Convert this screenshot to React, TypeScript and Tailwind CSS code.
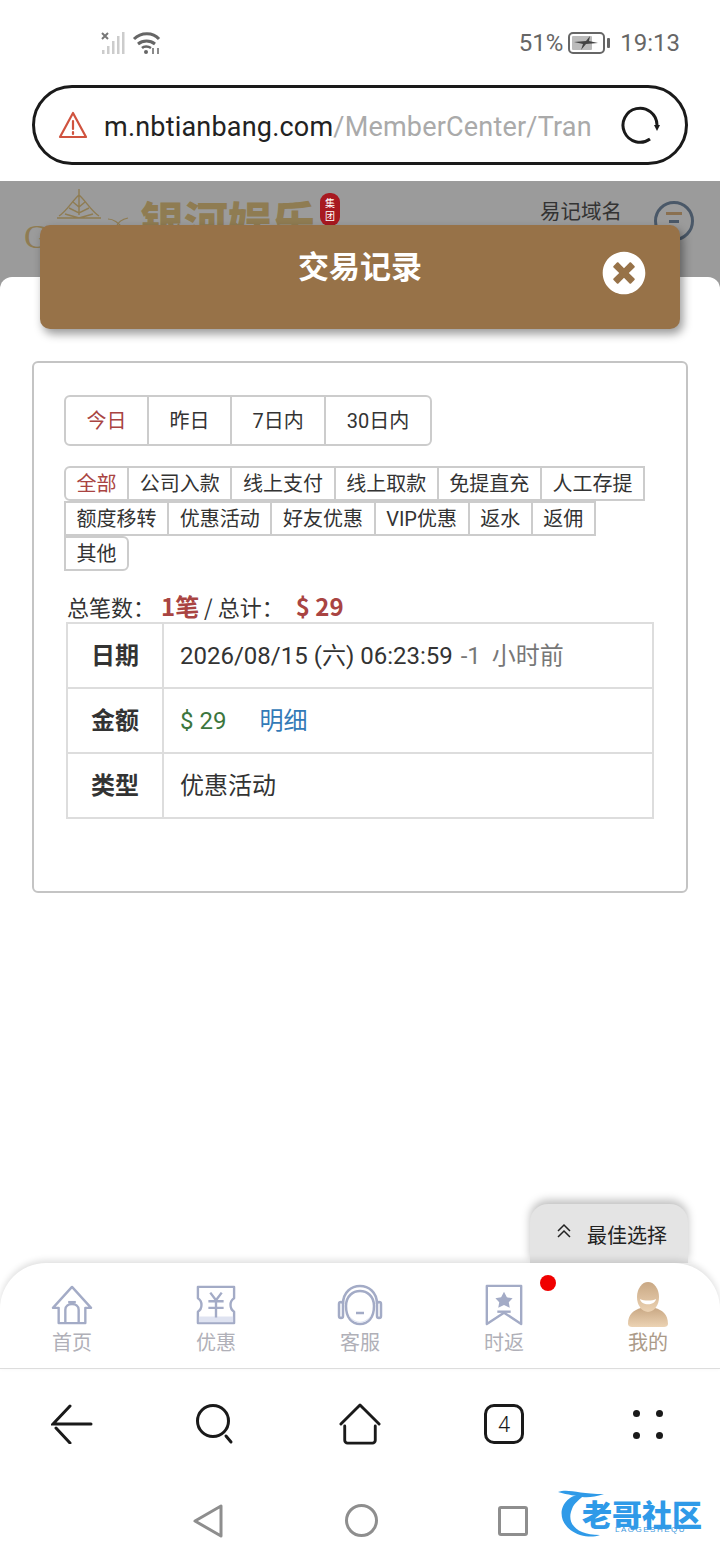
import React from 'react';
import { FaTimesCircle } from 'react-icons/fa';

const cjk = '[font-family:Roboto,"Noto_Sans_CJK_SC",sans-serif]';

const dateTabs = [
  { label: '今日', active: true },
  { label: '昨日' },
  { label: '7日内' },
  { label: '30日内' },
];

const filterTabs = [
  '全部', '公司入款', '线上支付', '线上取款', '免提直充', '人工存提',
  '额度移转', '优惠活动', '好友优惠', 'VIP优惠', '返水', '返佣', '其他',
];

const StatusBar = () => (
  <div className="h-[85px] flex items-center justify-between pl-[100px] pr-[40px] text-[#666] shrink-0">
    <div className="flex items-center gap-[6px]">
      <svg width="26" height="24" viewBox="0 0 26 24">
        <path d="M2 2l6 6M8 2l-6 6" stroke="#777" strokeWidth="2" />
        <rect x="2" y="19" width="2.5" height="4" fill="#ccc" />
        <rect x="7" y="15" width="2.5" height="8" fill="#ccc" />
        <rect x="12" y="10" width="2.5" height="13" fill="#ccc" />
        <rect x="17" y="5" width="2.5" height="18" fill="#ccc" />
        <rect x="22" y="1" width="2.5" height="22" fill="#ccc" />
      </svg>
      <svg width="30" height="24" viewBox="0 0 30 24" fill="none" stroke="#666" strokeWidth="3">
        <path d="M2 8c7-7 19-7 25 0" />
        <path d="M6 13c5-4 12-4 17 0" />
        <path d="M10 17c2-2 6-2 9 0" strokeWidth="2.5" />
        <circle cx="14" cy="21" r="2" fill="#666" stroke="none" />
        <path d="M21 23v-6M26 17v6" strokeWidth="1.5" />
      </svg>
    </div>
    <div className={`flex items-center text-[24px] ${cjk}`}>
      <span>51%</span>
      <svg className="ml-[5px]" width="44" height="22" viewBox="0 0 44 22">
        <rect x="1" y="1" width="35" height="20" rx="4" fill="none" stroke="#666" strokeWidth="2" />
        <rect x="4" y="4" width="20" height="14" rx="1" fill="#bbb" />
        <path d="M6 10l12-1 4-5-1 5 9 2-12 1-5 6 2-6z" fill="#444" />
        <rect x="39" y="6" width="3" height="10" rx="1" fill="#666" />
      </svg>
      <span className="ml-[8px]">19:13</span>
    </div>
  </div>
);

const UrlBar = () => (
  <div className="h-[96px] px-[32px] shrink-0">
    <div className="h-[80px] border-[3px] border-[#1a1a1a] rounded-full flex items-center pl-[23px] pr-[25px]">
      <svg width="30" height="28" viewBox="0 0 30 28" fill="none" stroke="#d0533f" strokeWidth="2.2" strokeLinejoin="round">
        <path d="M15 2L28 26H2z" />
        <path d="M15 10v8M15 21v2" strokeLinecap="round" />
      </svg>
      <div className={`ml-[16px] pt-[5px] w-[490px] overflow-hidden whitespace-nowrap text-[27px] tracking-[0.2px] text-[#222] ${cjk}`}>
        m.nbtianbang.com<span className="text-[#aaa]">/MemberCenter/Tran</span>
      </div>
      <svg className="ml-auto" width="40" height="40" viewBox="0 0 40 40" fill="none" stroke="#1a1a1a" strokeWidth="3">
        <path d="M30 34A17 17 0 1 1 37 20" />
        <path d="M34 20h6l-3 6z" fill="#1a1a1a" stroke="none" />
      </svg>
    </div>
  </div>
);

const SiteHeader = () => (
  <div className="h-[108px] bg-[#9b9b9b] flex items-start shrink-0 overflow-hidden pl-[24px] pr-[26px]">
    <div className="flex items-start">
      <div className="flex flex-col items-center w-[110px] pt-[8px]">
        <svg width="46" height="30" viewBox="0 0 46 30" fill="none" stroke="#8f7c52" strokeWidth="1.4">
          <path d="M23 0v26M1 29h44M3 27C11 22 16 12 23 6c7 6 12 16 20 21M9 25l14 4 14-4M13 19l10 5 10-5M17 13l6 5 6-5" />
        </svg>
        <span className="text-[#8f7c52] text-[34px] self-start leading-none mt-[1px] [font-family:'Liberation_Serif',serif]">G</span>
      </div>
      <svg className="ml-[-28px] mt-[36px]" width="24" height="10" viewBox="0 0 24 10" fill="none" stroke="#8f7c52" strokeWidth="1.2">
        <path d="M2 2c6 0 10 4 14 8M22 1c-5 1-10 4-12 9" />
      </svg>
      <span className="text-[#8f7c52] text-[44px] font-black leading-none mt-[17px] ml-[10px] [font-family:'Noto_Sans_CJK_SC',sans-serif] whitespace-nowrap">银河娱乐</span>
      <div className="ml-[4px] mt-[12px] w-[20px] h-[33px] rounded-[9px] bg-[#a81920] text-white text-[10px] leading-[13px] text-center pt-[3px] [font-family:'Noto_Sans_CJK_SC',sans-serif]">集<br />团</div>
    </div>
    <span className="ml-auto mt-[14px] text-[20.5px] text-[#333] [font-family:'Noto_Sans_CJK_SC',sans-serif]">易记域名</span>
    <div className="ml-[32px] mt-[20px] w-[40px] h-[40px] rounded-full border-[3px] border-[#4a5868] flex flex-col items-center pt-[8px] gap-[5px]">
      <div className="w-[16px] h-[3px] bg-[#8a7050]" />
      <div className="w-[10px] h-[3px] bg-[#4a5868]" />
    </div>
  </div>
);

const ModalTitle = () => (
  <div className="absolute left-[40px] top-[225px] w-[640px] h-[104px] bg-[#977248] rounded-[10px] shadow-[3px_5px_10px_rgba(0,0,0,0.4)] flex items-center justify-center">
    <span className="text-white text-[31px] font-bold mt-[-23px] [font-family:'Noto_Sans_CJK_SC',sans-serif]">交易记录</span>
    <FaTimesCircle className="absolute right-[34px] top-[26px] text-white" size={44} />
  </div>
);

const RecordCard = () => (
  <div className={`mx-[32px] mt-[84px] h-[532px] border-2 border-[#c4c4c4] rounded-[6px] pt-[32px] pl-[30px] pr-[30px] text-[#333] shrink-0 ${cjk}`}>
    <div className="flex w-fit h-[51px] border-2 border-[#ccc] rounded-[6px] text-[20px]">
      {dateTabs.map((t, i) => (
        <div
          key={t.label}
          className={`flex items-center px-[20.5px] ${i > 0 ? 'border-l-2 border-[#ccc]' : ''} ${t.active ? 'text-[#a94442]' : ''}`}
        >
          {t.label}
        </div>
      ))}
    </div>

    <div className="flex flex-wrap w-[590px] mt-[20px] text-[20px]">
      {filterTabs.map((t, i) => (
        <div
          key={t}
          className={`h-[35px] px-[10.6px] flex items-center border-2 border-[#ccc] ml-[-2px] first:ml-0 [&:nth-child(7)]:ml-0 [&:nth-child(13)]:ml-0 ${
            i === 0 ? 'text-[#a94442] rounded-l-[6px]' : ''
          } ${i === 12 ? 'rounded-r-[6px]' : ''}`}
        >
          {t}
        </div>
      ))}
    </div>

    <div className="mt-[19px] pl-[3px] text-[22px] leading-[32px] whitespace-nowrap [font-family:'Noto_Sans_CJK_SC',sans-serif]">
      总笔数：
      <b className="ml-[6px] text-[#a94442] text-[24px]">1笔</b>
      <span> / 总计：</span>
      <b className="ml-[12px] text-[#a94442] text-[24px]">$ 29</b>
    </div>

    <table className="ml-[2px] w-[588px] border-collapse text-[24px]">
      <tbody>
        <tr className="h-[65px]">
          <th className="w-[96px] border-2 border-[#ddd] font-bold">日期</th>
          <td className="border-2 border-[#ddd] pl-[16px]">
            2026/08/15 (六) 06:23:59 <span className="ml-[2px] text-[#777] [word-spacing:5px]">-1 小时前</span>
          </td>
        </tr>
        <tr className="h-[65px]">
          <th className="border-2 border-[#ddd] font-bold">金额</th>
          <td className="border-2 border-[#ddd] pl-[16px]">
            <span className="text-[#3c763d]">$ 29</span>
            <span className="ml-[33px] text-[#337ab7]">明细</span>
          </td>
        </tr>
        <tr className="h-[65px]">
          <th className="border-2 border-[#ddd] font-bold">类型</th>
          <td className="border-2 border-[#ddd] pl-[16px]">优惠活动</td>
        </tr>
      </tbody>
    </table>
  </div>
);

const HomeIcon = () => (
  <svg width="44" height="40" viewBox="0 0 44 42" fill="none" stroke="#a3abc6" strokeWidth="2.5" strokeLinejoin="round">
    <path d="M22 2L2 24h6v16h28V24h6z" />
    <path d="M15 40V26c0-8 14-8 14 0v14" />
    <path d="M18 18h8" strokeWidth="2.5" />
  </svg>
);
const TicketIcon = () => (
  <svg width="42" height="40" viewBox="0 0 42 42" fill="none" stroke="#a3abc6" strokeWidth="2.5" strokeLinejoin="round">
    <path d="M2 2h38v12c-5 3-5 11 0 14v12H2V28c5-3 5-11 0-14z" />
    <path d="M3 33h36v6H3z" fill="#dfe3f1" stroke="none" />
    <path d="M15 8l6 8 6-8M13 17h16M13 24h16M21 16v18" />
  </svg>
);
const ServiceIcon = () => (
  <svg width="46" height="42" viewBox="0 0 46 42" fill="none" stroke="#a3abc6" strokeWidth="2.5">
    <path d="M6 20C6 -4 40 -4 40 20" />
    <path d="M9 22c0-20 28-20 28 0 0 12-6 18-14 18S9 34 9 22z" fill="#fff" />
    <path d="M12 31c6 9 16 9 22 0-3 10-19 10-22 0z" fill="#dfe3f1" stroke="none" />
    <rect x="2" y="18" width="4" height="16" rx="2" />
    <rect x="40" y="18" width="4" height="16" rx="2" />
    <path d="M19 29h8" />
  </svg>
);
const BookmarkIcon = () => (
  <svg width="40" height="42" viewBox="0 0 40 44" fill="none" stroke="#a3abc6" strokeWidth="2.5" strokeLinejoin="round">
    <path d="M2 2h36v40L20 30 2 42z" />
    <path d="M20 8l3 6 6 1-4 4 1 6-6-3-6 3 1-6-4-4 6-1z" fill="#a3abc6" stroke="none" />
    <path d="M13 29h14" />
  </svg>
);
const UserIcon = () => (
  <svg width="42" height="46" viewBox="0 0 42 46">
    <defs>
      <linearGradient id="skin" x1="0" y1="0" x2="0" y2="1">
        <stop offset="0" stopColor="#c9a884" />
        <stop offset="1" stopColor="#ecd3b4" />
      </linearGradient>
    </defs>
    <path d="M1 42c0-10 6-14 13-16l7 3 7-3c7 2 13 6 13 16 0 2-2 3-4 3H5c-2 0-4-1-4-3z" fill="url(#skin)" />
    <ellipse cx="21" cy="15" rx="11" ry="15" fill="url(#skin)" />
    <path d="M13 17c4 2 12 2 16 0-1 7-15 7-16 0z" fill="#fff" />
  </svg>
);

const navItems = [
  { label: '首页', icon: <HomeIcon /> },
  { label: '优惠', icon: <TicketIcon /> },
  { label: '客服', icon: <ServiceIcon /> },
  { label: '时返', icon: <BookmarkIcon />, dot: true },
  { label: '我的', icon: <UserIcon />, me: true },
];

const BottomNav = () => (
  <div className="h-[106px] relative z-10 shrink-0 rounded-t-[46px] bg-white shadow-[0_-3px_6px_rgba(0,0,0,0.12)] border-b-[1.5px] border-[#ddd] flex">
    {navItems.map(n => (
      <div key={n.label} className="relative w-[144px] flex flex-col items-center pt-[19px]">
        <div className="h-[46px] flex items-center justify-center">{n.icon}</div>
        <span className={`text-[20px] leading-[26px] mt-[1px] [font-family:'Noto_Sans_CJK_SC',sans-serif] ${n.me ? 'text-[#ab9a88]' : 'text-[#b0b0b8]'}`}>
          {n.label}
        </span>
        {n.dot && <div className="absolute left-[108px] top-[12px] w-[16px] h-[16px] rounded-full bg-[#f00000]" />}
      </div>
    ))}
  </div>
);

const BrowserBar = () => (
  <div className="h-[101px] pt-[9px] flex items-center shrink-0 text-[#1a1a1a]">
    <div className="w-[144px] flex justify-center">
      <svg width="42" height="40" viewBox="0 0 42 40" fill="none" stroke="#1a1a1a" strokeWidth="3" strokeLinecap="round">
        <path d="M19 2L2 20h38M5 24l14 15" />
      </svg>
    </div>
    <div className="w-[144px] flex justify-center">
      <svg className="ml-[-2px]" width="40" height="42" viewBox="0 0 40 42" fill="none" stroke="#1a1a1a" strokeWidth="3" strokeLinecap="round">
        <circle cx="18" cy="18" r="15.500" />
        <path d="M31 33l5 6" />
      </svg>
    </div>
    <div className="w-[144px] flex justify-center">
      <svg width="44" height="42" viewBox="0 0 44 44" fill="none" stroke="#1a1a1a" strokeWidth="3" strokeLinejoin="round" strokeLinecap="round">
        <path d="M2 22L22 2l20 20" />
        <path d="M6 24v15a3 3 0 0 0 3 3h26a3 3 0 0 0 3-3V24" />
      </svg>
    </div>
    <div className="w-[144px] flex justify-center">
      <div className={`w-[40px] h-[40px] rounded-[10px] border-[3px] border-[#1a1a1a] flex items-center justify-center text-[22px] font-light ${cjk}`}>4</div>
    </div>
    <div className="w-[144px] flex justify-center">
      <div className="grid grid-cols-2 gap-x-[16px] gap-y-[15px]">
        <div className="w-[7px] h-[7px] rounded-full bg-[#1a1a1a]" />
        <div className="w-[7px] h-[7px] rounded-full bg-[#1a1a1a]" />
        <div className="w-[7px] h-[7px] rounded-full bg-[#1a1a1a]" />
        <div className="w-[7px] h-[7px] rounded-full bg-[#1a1a1a]" />
      </div>
    </div>
  </div>
);

const SystemNav = () => (
  <div className="h-[90px] relative flex items-start justify-center pt-[34px] gap-[120px] shrink-0">
    <svg className="mr-[2px]" width="30" height="34" viewBox="0 0 30 34" fill="none" stroke="#8e8e8e" strokeWidth="3" strokeLinejoin="round">
      <path d="M28 2v30L2 17z" />
    </svg>
    <div className="w-[33px] h-[33px] rounded-full border-[3px] border-[#8e8e8e]" />
    <div className="w-[30px] h-[30px] mt-[2px] rounded-[3px] border-[3px] border-[#8e8e8e]" />
    {/* watermark */}
    <div className="absolute left-[556px] top-[18px] w-[150px] h-[52px]">
      <svg className="absolute left-0 top-0" width="70" height="52" viewBox="0 0 70 52" fill="none">
        <path d="M30 6C4 4 -6 36 24 47c8 2 14 2 20 0-24 0-34-12-28-26 2-6 8-10 14-15z" fill="#2f9ae8" />
        <path d="M2 4c10-4 20 2 46 2-12 4-20 4-26 2 0 0-10-1-20-4z" fill="#2f9ae8" />
      </svg>
      <div className="absolute left-[26px] top-[16px] text-[30px] leading-[18px] font-black text-[#2f9ae8] whitespace-nowrap [font-family:'Noto_Sans_CJK_SC',sans-serif]">老哥社区</div>
      <div className="absolute left-[59px] top-[38px] text-[8px] leading-[8px] text-[#3d97dc] tracking-[1.5px] whitespace-nowrap [font-family:'Liberation_Sans',sans-serif]">LAOGESHEQU</div>
    </div>
  </div>
);

export default function App() {
  return (
    <div className="relative w-[720px] h-[1560px] overflow-hidden bg-white flex flex-col [font-family:'Noto_Sans_CJK_SC',sans-serif]">
      <StatusBar />
      <UrlBar />
      <SiteHeader />
      <div className="flex-1 min-h-0 bg-white rounded-t-[12px] mt-[-12px] relative flex flex-col overflow-hidden">
        <RecordCard />
        <div className="mt-auto self-end mr-[32px] w-[158px] h-[59px] bg-[#e4e4e4] rounded-t-[18px] shadow-[0_-4px_8px_rgba(0,0,0,0.25)] flex items-center pl-[26px] pt-[3px] gap-[15px]">
          <svg className="mt-[-8px]" width="16" height="16" viewBox="0 0 16 16" fill="none" stroke="#222" strokeWidth="1.5">
            <path d="M2 8l6-6 6 6M2 14l6-6 6 6" />
          </svg>
          <span className="text-[20px] text-[#222] whitespace-nowrap">最佳选择</span>
        </div>
      </div>
      <BottomNav />
      <BrowserBar />
      <SystemNav />
      <ModalTitle />
    </div>
  );
}
